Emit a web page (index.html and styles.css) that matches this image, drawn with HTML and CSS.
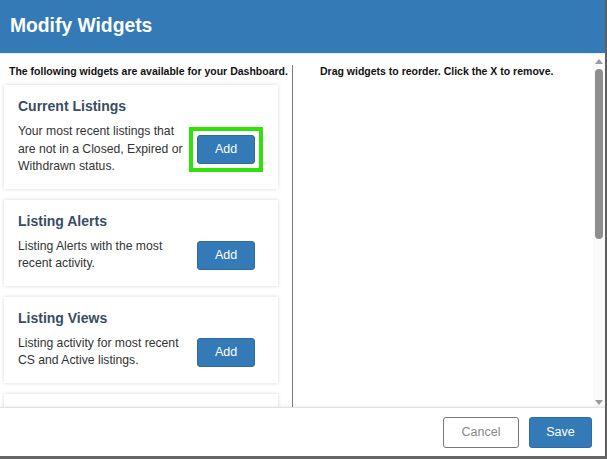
FILE: index.html
```html
<!DOCTYPE html>
<html>
<head>
<meta charset="utf-8">
<link rel="stylesheet" href="styles.css">
</head>
<body>
<div class="modal">
  <div class="modal-header"><h1 class="modal-title">Modify Widgets</h1></div>
  <div class="modal-body">
    <div class="columns">
      <div class="col-left">
        <div class="col-heading left-heading">The following widgets are available for your Dashboard.</div>
        <div class="card-list">
          <div class="card">
            <div class="card-title">Current Listings</div>
            <div class="card-row">
              <div class="card-desc">Your most recent listings that are not in a Closed, Expired or Withdrawn status.</div>
              <span class="highlight"><button class="btn btn-primary btn-add-inner">Add</button></span>
            </div>
          </div>
          <div class="card">
            <div class="card-title">Listing Alerts</div>
            <div class="card-row">
              <div class="card-desc">Listing Alerts with the most recent activity.</div>
              <button class="btn btn-primary btn-add">Add</button>
            </div>
          </div>
          <div class="card">
            <div class="card-title">Listing Views</div>
            <div class="card-row">
              <div class="card-desc">Listing activity for most recent CS and Active listings.</div>
              <button class="btn btn-primary btn-add">Add</button>
            </div>
          </div>
          <div class="card card-empty"></div>
        </div>
      </div>
      <div class="col-right">
        <div class="col-heading right-heading">Drag widgets to reorder. Click the X to remove.</div>
      </div>
    </div>
    <div class="scrollbar">
      <svg class="arrow" width="12" height="10" viewBox="0 0 12 10"><path d="M2 8 L6 3 L10 8 Z" fill="#9a9a9a"/></svg>
      <div class="thumb"></div>
      <div class="track-rest"></div>
      <svg class="arrow" width="12" height="10" viewBox="0 0 12 10"><path d="M2 3 L10 3 L6 8 Z" fill="#9a9a9a"/></svg>
    </div>
  </div>
  <div class="modal-footer">
    <button class="btn btn-default">Cancel</button>
    <button class="btn btn-primary btn-save">Save</button>
  </div>
</div>
<div class="backdrop-strip"></div>
</body>
</html>
```

FILE: styles.css
```css
html, body {
  margin: 0;
  padding: 0;
}
body {
  width: 607px;
  height: 459px;
  overflow: hidden;
  background: #5f5f5f;
  font-family: "Liberation Sans", Arial, sans-serif;
}
.modal {
  width: 605px;
  height: 456px;
  background: #fff;
  display: flex;
  flex-direction: column;
}
.modal-header {
  height: 53px;
  flex: none;
  background: #337ab7;
  display: flex;
  align-items: center;
  padding-left: 10px;
  border-bottom: 1px solid #e4eef6;
}
.modal-title {
  margin: 0;
  color: #fff;
  font-size: 19.3px;
  font-weight: bold;
  line-height: 22px;
  padding-bottom: 1px;
}
.modal-body {
  flex: 1;
  display: flex;
  overflow: hidden;
  min-height: 0;
}
.columns {
  flex: 1;
  display: flex;
  padding-top: 11px;
}
.col-left {
  width: 288px;
  padding-left: 4px;
  border-right: 1px solid #7a7a7a;
  flex: none;
}
.col-heading {
  font-size: 10.5px;
  font-weight: bold;
  line-height: 13px;
  color: #111;
}
.left-heading {
  padding-left: 5px;
  white-space: nowrap;
}
.right-heading {
  padding-left: 27px;
}
.col-right {
  flex: 1;
}
.card-list {
  margin-top: 7px;
  display: flex;
  flex-direction: column;
  gap: 11px;
}
.card {
  width: 274px;
  box-sizing: border-box;
  background: #fff;
  box-shadow: 0 0 4px rgba(0, 0, 0, 0.16);
  padding: 13px 14px 13px 14px;
}
.card-empty {
  height: 60px;
  flex: none;
}
.card-title {
  font-size: 14px;
  font-weight: bold;
  line-height: 16px;
  color: #3a4c63;
  margin-bottom: 9px;
}
.card-row {
  display: flex;
  align-items: center;
}
.card-desc {
  width: 172px;
  font-size: 12.2px;
  line-height: 17.5px;
  color: #333;
}
.btn {
  font-family: "Liberation Sans", Arial, sans-serif;
  border-radius: 3px;
  cursor: pointer;
  padding: 0;
}
.btn-primary {
  background: #337ab7;
  border: 1px solid #2e6da4;
  color: #fff;
}
.btn-add {
  width: 58px;
  height: 29px;
  font-size: 12.5px;
  margin-left: auto;
  margin-right: 9px;
}
.highlight {
  display: flex;
  border: 4px solid #2ee20a;
  padding: 4px;
  margin: -8px 1px -8px auto;
}
.btn-add-inner {
  width: 58px;
  height: 29px;
  font-size: 12.5px;
}
.scrollbar {
  width: 12px;
  flex: none;
  background: #fafafa;
  display: flex;
  flex-direction: column;
  align-items: center;
}
.arrow {
  flex: none;
  display: block;
  margin-top: 2px;
}
.thumb {
  width: 8px;
  height: 170px;
  background: #8e8e8e;
  border-radius: 4px;
  margin-top: 3px;
  flex: none;
}
.track-rest {
  flex: 1;
}
.modal-footer {
  height: 48px;
  flex: none;
  border-top: 1px solid #e2e2e2;
  box-shadow: 0 -1px 3px rgba(0, 0, 0, 0.06);
  display: flex;
  justify-content: flex-end;
  align-items: center;
  gap: 10px;
  padding-right: 13px;
}
.btn-default {
  width: 76px;
  height: 31px;
  background: #fff;
  border: 1px solid #777;
  color: #8a8a8a;
  font-size: 12.5px;
}
.btn-save {
  width: 63px;
  height: 31px;
  font-size: 12.5px;
}
.backdrop-strip {
  height: 3px;
  background: #666;
}
```
